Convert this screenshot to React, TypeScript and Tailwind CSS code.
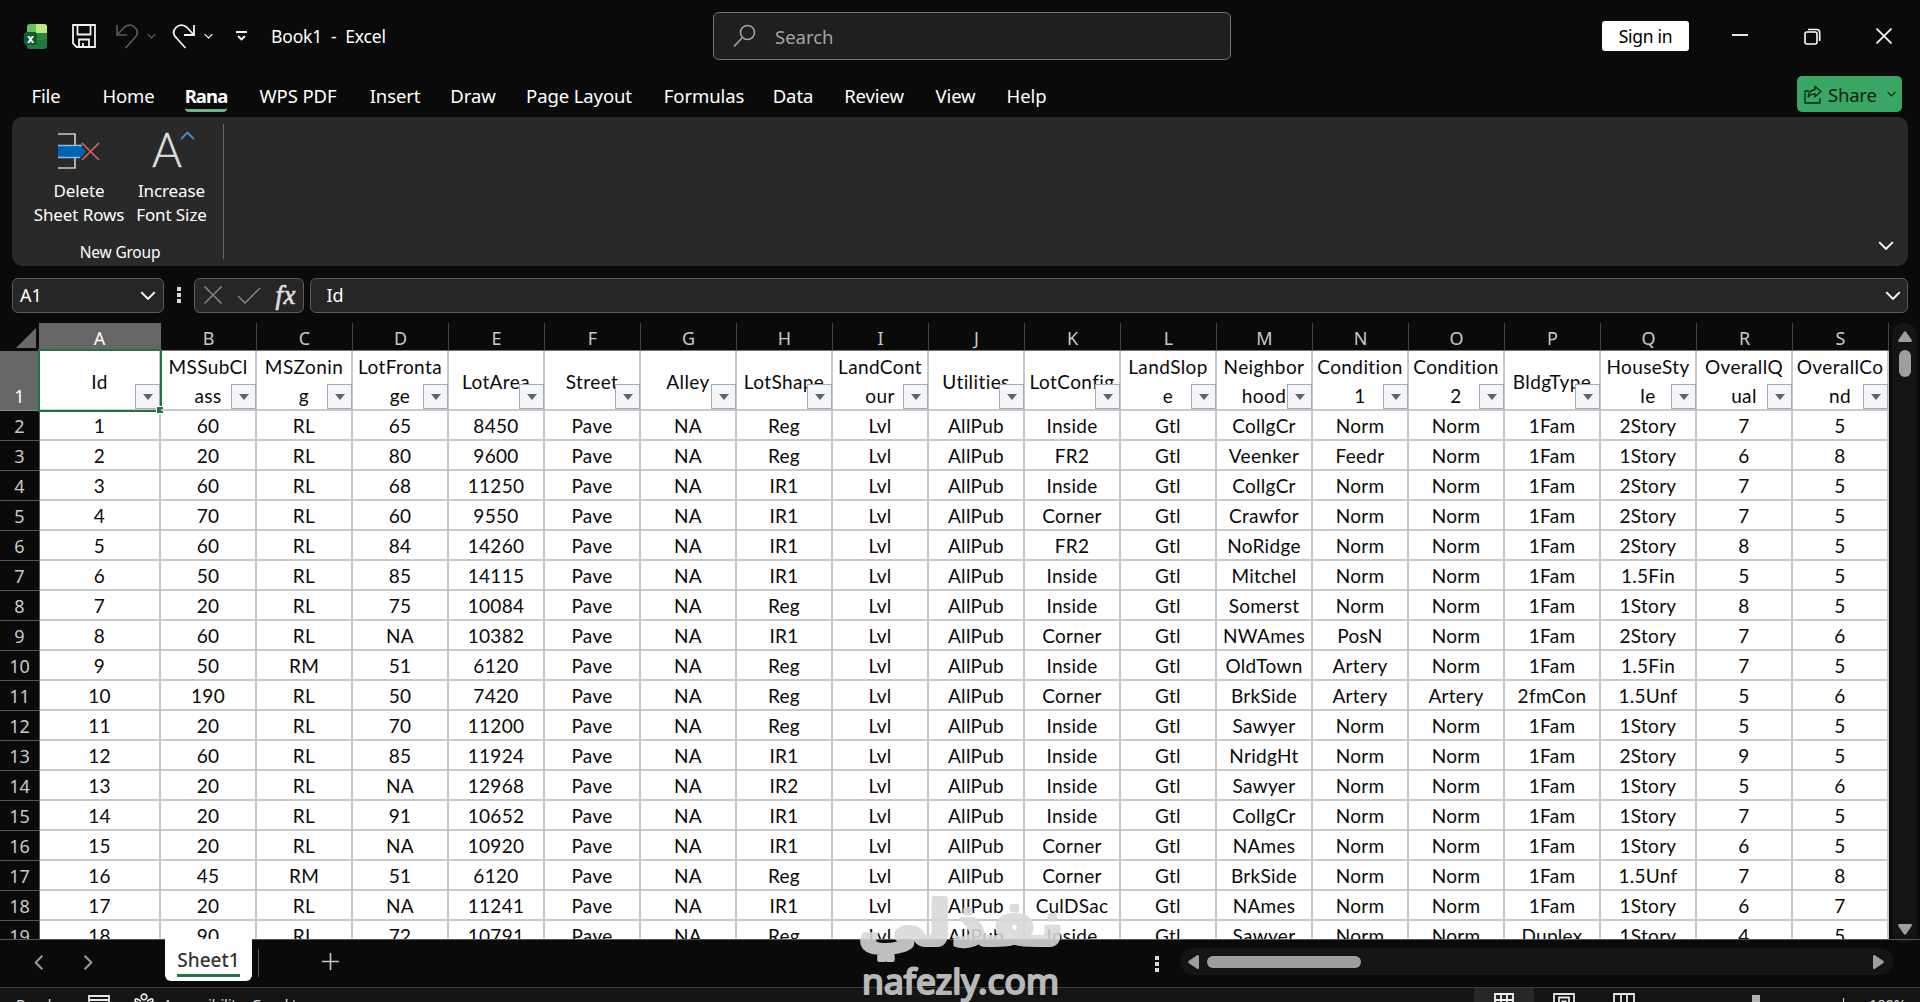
import clsx from 'clsx'

const TABS = [
  { label: 'File', cls: 'w-[92px]' },
  { label: 'Home', cls: 'w-[73px]' },
  { label: 'Rana', cls: 'w-[82px]', active: true },
  { label: 'WPS PDF', cls: 'w-[102px]' },
  { label: 'Insert', cls: 'w-[92px]' },
  { label: 'Draw', cls: 'w-[64px]' },
  { label: 'Page Layout', cls: 'w-[148px]' },
  { label: 'Formulas', cls: 'w-[102px]' },
  { label: 'Data', cls: 'w-[76px]' },
  { label: 'Review', cls: 'w-[86px]' },
  { label: 'View', cls: 'w-[77px]' },
  { label: 'Help', cls: 'w-[65px]' },
]

const LETTERS = 'ABCDEFGHIJKLMNOPQRS'.split('')

// Each header is a list of its wrapped lines
const HEADERS = [
  ['Id'],
  ['MSSubCl', 'ass'],
  ['MSZonin', 'g'],
  ['LotFronta', 'ge'],
  ['LotArea'],
  ['Street'],
  ['Alley'],
  ['LotShape'],
  ['LandCont', 'our'],
  ['Utilities'],
  ['LotConfig'],
  ['LandSlop', 'e'],
  ['Neighbor', 'hood'],
  ['Condition', '1'],
  ['Condition', '2'],
  ['BldgType'],
  ['HouseSty', 'le'],
  ['OverallQ', 'ual'],
  ['OverallCo', 'nd'],
]

const ROWS = [
  '1 60 RL 65 8450 Pave NA Reg Lvl AllPub Inside Gtl CollgCr Norm Norm 1Fam 2Story 7 5',
  '2 20 RL 80 9600 Pave NA Reg Lvl AllPub FR2 Gtl Veenker Feedr Norm 1Fam 1Story 6 8',
  '3 60 RL 68 11250 Pave NA IR1 Lvl AllPub Inside Gtl CollgCr Norm Norm 1Fam 2Story 7 5',
  '4 70 RL 60 9550 Pave NA IR1 Lvl AllPub Corner Gtl Crawfor Norm Norm 1Fam 2Story 7 5',
  '5 60 RL 84 14260 Pave NA IR1 Lvl AllPub FR2 Gtl NoRidge Norm Norm 1Fam 2Story 8 5',
  '6 50 RL 85 14115 Pave NA IR1 Lvl AllPub Inside Gtl Mitchel Norm Norm 1Fam 1.5Fin 5 5',
  '7 20 RL 75 10084 Pave NA Reg Lvl AllPub Inside Gtl Somerst Norm Norm 1Fam 1Story 8 5',
  '8 60 RL NA 10382 Pave NA IR1 Lvl AllPub Corner Gtl NWAmes PosN Norm 1Fam 2Story 7 6',
  '9 50 RM 51 6120 Pave NA Reg Lvl AllPub Inside Gtl OldTown Artery Norm 1Fam 1.5Fin 7 5',
  '10 190 RL 50 7420 Pave NA Reg Lvl AllPub Corner Gtl BrkSide Artery Artery 2fmCon 1.5Unf 5 6',
  '11 20 RL 70 11200 Pave NA Reg Lvl AllPub Inside Gtl Sawyer Norm Norm 1Fam 1Story 5 5',
  '12 60 RL 85 11924 Pave NA IR1 Lvl AllPub Inside Gtl NridgHt Norm Norm 1Fam 2Story 9 5',
  '13 20 RL NA 12968 Pave NA IR2 Lvl AllPub Inside Gtl Sawyer Norm Norm 1Fam 1Story 5 6',
  '14 20 RL 91 10652 Pave NA IR1 Lvl AllPub Inside Gtl CollgCr Norm Norm 1Fam 1Story 7 5',
  '15 20 RL NA 10920 Pave NA IR1 Lvl AllPub Corner Gtl NAmes Norm Norm 1Fam 1Story 6 5',
  '16 45 RM 51 6120 Pave NA Reg Lvl AllPub Corner Gtl BrkSide Norm Norm 1Fam 1.5Unf 7 8',
  '17 20 RL NA 11241 Pave NA IR1 Lvl AllPub CulDSac Gtl NAmes Norm Norm 1Fam 1Story 6 7',
  '18 90 RL 72 10791 Pave NA Reg Lvl AllPub Inside Gtl Sawyer Norm Norm Duplex 1Story 4 5',
].map((row) => row.split(' '))

function Chevron({ className }: { className?: string }) {
  return (
    <svg viewBox="0 0 14 8" fill="none" stroke="currentColor" className={className}>
      <path d="M1 1l6 6 6-6" strokeWidth="1.8" />
    </svg>
  )
}

function Dots({ className }: { className?: string }) {
  return (
    <div className={clsx('flex flex-col gap-[2.5px]', className)}>
      <i className="size-[3.5px] bg-[#d8d8d8]" />
      <i className="size-[3.5px] bg-[#d8d8d8]" />
      <i className="size-[3.5px] bg-[#d8d8d8]" />
    </div>
  )
}

function TitleBar() {
  return (
    <header className="flex h-[72px] shrink-0 items-center pl-6">
      <svg width="23" height="25" viewBox="0 0 23 25">
        <rect x="3" y="0" width="20" height="25" rx="3" fill="#1f7a3c" />
        <path d="M3 9V3a3 3 0 0 1 3-3h6v9z" fill="#5fc45c" />
        <path d="M12 0h8a3 3 0 0 1 3 3v6H12z" fill="#bdea7b" />
        <path d="M12 9h11v7H12z" fill="#26873e" />
        <rect x="0" y="8" width="13" height="13" rx="2.5" fill="#125c34" />
        <text x="6.5" y="18.5" fill="#fff" fontSize="11.5" fontWeight="700" fontFamily="Noto Sans, sans-serif" textAnchor="middle">x</text>
      </svg>
      <svg width="26" height="26" viewBox="0 0 26 26" fill="none" stroke="#f2f2f2" strokeWidth="1.8" className="ml-6">
        <path d="M2 2h22v22H5.500L2 20.500z" />
        <path d="M6.500 2v9.500h13V2M8 24v-7.500h10V24M12 20v4" />
      </svg>
      <svg width="24" height="26" viewBox="0 0 24 26" fill="none" stroke="#5a5a5a" strokeWidth="1.7" className="ml-[18px]">
        <path d="M2 2v10h10M2.500 11.500L9 4.500c3-3 8-3.200 11 0s3 7 0 10L10.500 25" />
      </svg>
      <Chevron className="ml-[8px] h-[6px] w-[9px] text-[#666]" />
      <svg width="24" height="26" viewBox="0 0 24 26" fill="none" stroke="#f2f2f2" strokeWidth="1.8" className="ml-4">
        <path d="M22 2v10H12M21.500 11.500L15 4.500c-3-3-8-3.200-11 0s-3 7 0 10L13.500 25" />
      </svg>
      <Chevron className="ml-[8px] h-[6px] w-[9px] text-white" />
      <svg width="13" height="10" viewBox="0 0 13 10" fill="none" stroke="#f2f2f2" strokeWidth="1.8" className="ml-[22px]">
        <path d="M1 1h11M3 5l3.500 3.500L10 5" />
      </svg>
      <span className="ml-[23px] w-[116px] whitespace-pre pt-px text-[17.500px] tracking-[-0.15px]">Book1  -  Excel</span>
      <div className="ml-[326px] flex h-12 w-[518px] items-center rounded-md border border-[#757575] bg-[#1f1f1f] pl-[19px] text-[#a3a3a3]">
        <svg width="23" height="24" viewBox="0 0 23 24" fill="none" stroke="currentColor" strokeWidth="1.6">
          <circle cx="14.500" cy="8.500" r="7" />
          <path d="M9.500 13.500L1 22.500" />
        </svg>
        <span className="ml-[19px] pt-px text-[18.500px]">Search</span>
      </div>
      <div className="ml-[371px] flex h-[30px] w-[87px] items-center justify-center rounded-[3px] bg-white pt-px text-[17.500px] tracking-[-0.3px] text-black">
        Sign in
      </div>
      <svg width="16" height="16" viewBox="0 0 16 16" className="ml-[43px]">
        <path d="M0 7h16" stroke="#fff" strokeWidth="1.8" />
      </svg>
      <svg width="17" height="17" viewBox="0 0 17 17" fill="none" stroke="#fff" strokeWidth="1.6" className="ml-14">
        <rect x="1" y="4" width="12" height="12" rx="2" />
        <path d="M4 1.500h8.500a3.200 3.200 0 0 1 3.200 3.200V13" />
      </svg>
      <svg width="16" height="16" viewBox="0 0 16 16" stroke="#fff" strokeWidth="1.6" className="ml-[55px]">
        <path d="M.5.5l15 15M15.500.5l-15 15" />
      </svg>
    </header>
  )
}

function RibbonTabs() {
  return (
    <nav className="flex h-[45px] shrink-0 items-start">
      {TABS.map((tab) => (
        <div key={tab.label} className={clsx('flex justify-center', tab.cls)}>
          <div
            className={clsx(
              'h-10 whitespace-nowrap pt-[9px] leading-[30px]',
              tab.active
                ? 'rounded-b-sm border-b-[3px] border-[#6cb58b] text-[18.500px] font-bold tracking-[-0.9px]'
                : 'text-[18.500px] tracking-[-0.1px]',
            )}
          >
            {tab.label}
          </div>
        </div>
      ))}
      <div className="ml-auto mr-[18px] mt-1 flex h-9 w-[105px] items-center rounded-[5px] bg-[#3aa663] pl-[7px] text-[#0b2314]">
        <svg width="18" height="19" viewBox="0 0 18 19" fill="none" stroke="currentColor" strokeWidth="1.3">
          <path d="M5 6H1v12h15v-5" />
          <path d="M11 1.500l6 5-6 5V8.800c-3.500 0-5.500 1-7 3.700.3-4.500 2.800-7.500 7-8z" />
        </svg>
        <span className="ml-[6px] w-[51px] pt-px text-[18.500px] tracking-[-0.2px]">Share</span>
        <Chevron className="ml-[8px] h-[6px] w-[9px]" />
      </div>
    </nav>
  )
}

function Ribbon() {
  return (
    <section className="mx-3 flex h-[149px] shrink-0 rounded-[10px] bg-[#292929]">
      <div className="my-[7px] flex w-[212px] flex-col border-r border-[#666]">
        <div className="flex text-[17px] leading-6 tracking-[-0.1px]">
          <div className="ml-[17px] flex w-[100px] flex-col items-center whitespace-nowrap">
            <svg width="44" height="38" viewBox="0 0 44 38" fill="none" className="ml-[-1px] mt-[8px]">
              <path d="M1 2h17v11M18 26v10H1" stroke="#c8c8c8" strokeWidth="1.7" />
              <path d="M1 13.500h23l5 6-5 6H1z" fill="#0063b1" />
              <path d="M1 13.500h24M1 25.500h22" stroke="#83beec" strokeWidth="1.4" />
              <path d="M25 11l17 17M42 11L25 28" stroke="#e25b5f" strokeWidth="1.7" />
            </svg>
            <span className="mt-[9px]">Delete</span>
            <span>Sheet Rows</span>
          </div>
          <div className="flex w-[85px] flex-col items-center whitespace-nowrap">
            <div className="relative mt-[8px] flex h-[38px] w-[40px]">
              <span className="mt-[-2px] origin-left scale-x-95 font-[Lato] text-[48px] font-light leading-[38px] text-[#dedede] [-webkit-text-stroke:0.4px_#dedede]">A</span>
              <svg width="15" height="9" viewBox="0 0 15 9" fill="none" className="absolute left-[28px] top-[-1px]">
                <path d="M1 8l6.500-6.500L14 8" stroke="#3f8fd0" strokeWidth="1.8" />
              </svg>
            </div>
            <span className="mt-[9px]">Increase</span>
            <span>Font Size</span>
          </div>
        </div>
        <div className="mt-[15px] pl-[5px] text-center text-[15.500px] leading-5 tracking-[-0.2px]">New Group</div>
      </div>
      <Chevron className="mb-[16px] ml-auto mr-[14px] mt-auto h-[9px] w-[16px]" />
    </section>
  )
}

function FormulaBar() {
  return (
    <div className="flex h-[57px] shrink-0 items-center px-3 pt-px text-[18px]">
      <div className="flex h-[35px] w-[152px] items-center justify-between rounded-md border border-[#5c5c5c] bg-[#262626] pl-[7px] pr-[7px]">
        A1
        <Chevron className="h-[9px] w-[16px]" />
      </div>
      <Dots className="ml-[13px]" />
      <div className="ml-[13px] flex h-[35px] w-[110px] items-center rounded-md border border-[#5c5c5c] bg-[#262626] pl-[9px]">
        <svg width="18" height="18" viewBox="0 0 18 18" stroke="#858585" strokeWidth="1.5">
          <path d="M.5.5l17 17M17.500.5l-17 17" />
        </svg>
        <svg width="24" height="17" viewBox="0 0 24 17" fill="none" stroke="#858585" strokeWidth="1.5" className="ml-[15px]">
          <path d="M1 9l7 7L23 1" />
        </svg>
        <span className="ml-[15px] font-['Liberation_Serif'] text-[27px] italic leading-[30px] tracking-[0.5px] text-[#dcdcdc] [-webkit-text-stroke:0.7px_#dcdcdc]">fx</span>
      </div>
      <div className="ml-[6px] flex h-[35px] flex-1 items-center justify-between rounded-md border border-[#5c5c5c] bg-[#262626] pl-[16px] pr-[6px]">
        Id
        <Chevron className="h-[9px] w-[16px]" />
      </div>
    </div>
  )
}

function FilterButton() {
  return (
    <div className="absolute -right-px bottom-0 flex size-[25px] items-center justify-center border border-[#a6abb2] bg-[#f3f5f8]">
      <i className="border-x-[5px] border-t-[6px] border-x-transparent border-t-[#5f6368]" />
    </div>
  )
}

function Grid() {
  return (
    <div className="flex h-[616px] w-[1889px] flex-col overflow-hidden bg-white font-[Lato] text-[19px] text-[#0a0a0a]">
      <div className="flex h-[28px] shrink-0 bg-[#0a0a0a] font-['Noto_Sans'] text-[18px] leading-[31px] text-[#c9c9c9]">
        <div className="flex w-[39px] items-end justify-end pb-[3px] pr-[3px]">
          <i className="border-b-[20px] border-l-[20px] border-b-[#6a6a6a] border-l-transparent" />
        </div>
        {LETTERS.map((letter, i) => (
          <div
            key={letter}
            className={clsx(
              'border-b border-r text-center',
              i === 0 ? 'w-[122px] border-[#666] bg-[#666] text-white' : 'w-24 border-r-[#444] border-b-[#777]',
            )}
          >
            {letter}
          </div>
        ))}
      </div>
      <div className="flex h-[60px] shrink-0">
        <div className="flex w-10 items-end justify-center border-b border-r border-[#888] bg-[#666] pb-[2px] font-['Noto_Sans'] text-[18px] leading-6 text-white">
          1
        </div>
        {HEADERS.map((lines, i) => (
          <div
            key={i}
            className={clsx(
              'relative flex flex-col items-center justify-center border-b-2 border-r-2 border-[#c8c8c8] pt-[2px] leading-[29px] tracking-[0.4px]',
              i === 0 ? 'w-[121px]' : 'w-24',
            )}
          >
            {lines.map((line) => (
              <span key={line}>{line}</span>
            ))}
            <FilterButton />
            {i === 0 && (
              <div className="absolute -bottom-[3px] -left-[2px] -right-[3px] -top-[2px] border-2 border-[#217346]">
                <i className="absolute -bottom-[4px] -right-[4px] size-[8px] border border-white bg-[#217346]" />
              </div>
            )}
          </div>
        ))}
      </div>
      {ROWS.map((row, r) => (
        <div key={r} className="flex h-[30px] shrink-0">
          <div className="w-10 border-b border-r border-[#555] bg-[#0a0a0a] text-center font-['Noto_Sans'] text-[18px] leading-[30px] text-[#c9c9c9]">
            {r + 2}
          </div>
          {row.map((value, c) => (
            <div
              key={c}
              className={clsx(
                'border-b-2 border-r-2 border-[#c8c8c8] text-center leading-[30px] tracking-[0.3px]',
                c === 0 ? 'w-[121px]' : 'w-24',
              )}
            >
              {value}
            </div>
          ))}
        </div>
      ))}
    </div>
  )
}

function VerticalScrollbar() {
  return (
    <div className="ml-[3px] flex h-[620px] w-[25px] flex-col items-center rounded-xl bg-[#141414] text-[#9e9e9e]">
      <svg width="14" height="11" viewBox="0 0 14 11" fill="currentColor" className="mt-[8px]">
        <path d="M5.800 1a1.500 1.500 0 0 1 2.400 0l5.500 8c.6 1 0 2-1 2H1.300c-1 0-1.600-1-1-2z" />
      </svg>
      <div className="mt-[8px] h-[27px] w-[12px] rounded-full bg-[#9e9e9e]" />
      <svg width="14" height="11" viewBox="0 0 14 11" fill="currentColor" className="mb-[8px] mt-auto rotate-180">
        <path d="M5.800 1a1.500 1.500 0 0 1 2.400 0l5.500 8c.6 1 0 2-1 2H1.300c-1 0-1.600-1-1-2z" />
      </svg>
    </div>
  )
}

function SheetTabs() {
  return (
    <div className="flex h-[48px] shrink-0 border-t border-[#555]">
      <div className="flex w-[165px] items-center pb-[2px] pl-[31px] text-[#9a9a9a]">
        <Chevron className="h-[9px] w-[16px] rotate-90" />
        <Chevron className="ml-[33px] h-[9px] w-[16px] -rotate-90" />
      </div>
      <div className="relative -mt-px flex h-[42px] w-[87px] justify-center rounded-b-md bg-white">
        <div className="h-[38px] border-b-[3px] border-[#217346] pt-[7px] text-[19px] font-medium leading-[28px] text-[#333]">
          Sheet1
        </div>
      </div>
      <div className="ml-[6px] mt-[9px] h-[28px] w-px bg-[#555]" />
      <svg width="17" height="17" viewBox="0 0 17 17" stroke="#c8c8c8" strokeWidth="1.6" className="ml-[63px] mt-[13px]">
        <path d="M8.500 0v17M0 8.500h17" />
      </svg>
      <Dots className="ml-[816px] mt-[16px]" />
      <div className="ml-[22px] mt-[8px] flex h-[27px] w-[712px] items-center rounded-xl bg-[#141414] pl-[7px] pr-[6px] text-[#9e9e9e]">
        <svg width="11" height="14" viewBox="0 0 11 14" fill="currentColor">
          <path d="M1 5.800a1.500 1.500 0 0 0 0 2.400l8 5.500c1 .6 2 0 2-1V1.300c0-1-1-1.600-2-1z" />
        </svg>
        <div className="ml-[8px] h-[12px] w-[154px] rounded-full bg-[#9e9e9e]" />
        <svg width="11" height="14" viewBox="0 0 11 14" fill="currentColor" className="ml-auto mr-[3px] rotate-180">
          <path d="M1 5.800a1.500 1.500 0 0 0 0 2.400l8 5.500c1 .6 2 0 2-1V1.300c0-1-1-1.600-2-1z" />
        </svg>
      </div>
    </div>
  )
}

function StatusBar() {
  return (
    <footer className="flex h-[28px] shrink-0 border-t border-[#3c3c3c] bg-[#141414] text-[15px] leading-[20px] text-[#dcdcdc]">
      <span className="ml-[16px] mt-[6px] w-[72px]">Ready</span>
      <svg width="22" height="20" viewBox="0 0 22 20" fill="none" stroke="#e6e6e6" strokeWidth="1.800" className="mt-[7px]">
        <path d="M1 1h20v18H1zM1 5h20M5 8.500h5M12 8.500h5" />
      </svg>
      <svg width="20" height="22" viewBox="0 0 20 22" fill="none" stroke="#e6e6e6" strokeWidth="1.700" className="ml-[24px] mt-[5px]">
        <circle cx="10" cy="4" r="2.800" />
        <path d="M7 8L3 6C1 5 .5 8 2 8.800L7 11v4l-2 6M13 8l4-2c2-1 2.500 2 1 2.800L13 11v4l2 6" />
      </svg>
      <span className="ml-[9px] mt-[6px] w-[150px] whitespace-nowrap tracking-[-0.3px]">Accessibility: Good to go</span>
      <div className="ml-auto flex w-[60px] justify-center bg-[#262626]">
        <svg width="20" height="20" viewBox="0 0 20 20" fill="none" stroke="#f0f0f0" strokeWidth="1.800" className="mt-[5px]">
          <path d="M1 1h18v18H1zM1 7h18M1 13h18M7 1v18M13 1v18" />
        </svg>
      </div>
      <svg width="22" height="20" viewBox="0 0 22 20" fill="none" stroke="#e6e6e6" strokeWidth="1.800" className="ml-[19px] mt-[5px]">
        <path d="M1 1h20v18H1zM6 19V4.500h10V19M8.500 8.500h5" />
      </svg>
      <svg width="22" height="20" viewBox="0 0 22 20" fill="none" stroke="#e6e6e6" strokeWidth="1.800" className="ml-[38px] mt-[5px]">
        <path d="M1 1h20v18H1zM8 1v12M14 1v12" />
      </svg>
      <div className="ml-[117px] mt-[7px] h-[18px] w-[8px] bg-[#b0b0b0]" />
      <div className="ml-[83px] mt-[10px] h-3 w-px bg-[#dcdcdc]" />
      <span className="ml-[25px] mr-[12px] mt-[6px] w-[39px] tracking-[-0.3px]">100%</span>
    </footer>
  )
}

function Watermark() {
  return (
    <div className="pointer-events-none absolute left-[850px] top-[880px] h-[122px] w-[225px] overflow-hidden">
      <svg width="225" height="122" viewBox="0 0 225 122">
        <g opacity="0.88" fill="#d8d8d8" stroke="#d8d8d8" strokeLinejoin="round">
          <text x="111" y="65" textAnchor="middle" fontFamily="DejaVu Sans" fontWeight="700" fontSize="62" strokeWidth="4" textLength="206" lengthAdjust="spacingAndGlyphs" direction="rtl">
            نفذلي
          </text>
        </g>
        <text x="12" y="114" fill="#b8b8b8" stroke="#b8b8b8" strokeWidth="2" strokeLinejoin="round" fontFamily="Noto Sans" fontWeight="400" fontSize="34" textLength="197" lengthAdjust="spacingAndGlyphs">
          nafezly.com
        </text>
      </svg>
    </div>
  )
}

export default function App() {
  return (
    <div className="relative flex h-[1002px] w-[1920px] flex-col overflow-hidden bg-[#0a0a0a] font-['Noto_Sans','Open_Sans',sans-serif] text-white">
      <TitleBar />
      <RibbonTabs />
      <Ribbon />
      <FormulaBar />
      <div className="flex h-[616px] shrink-0">
        <Grid />
        <VerticalScrollbar />
      </div>
      <SheetTabs />
      <StatusBar />
      <Watermark />
    </div>
  )
}
